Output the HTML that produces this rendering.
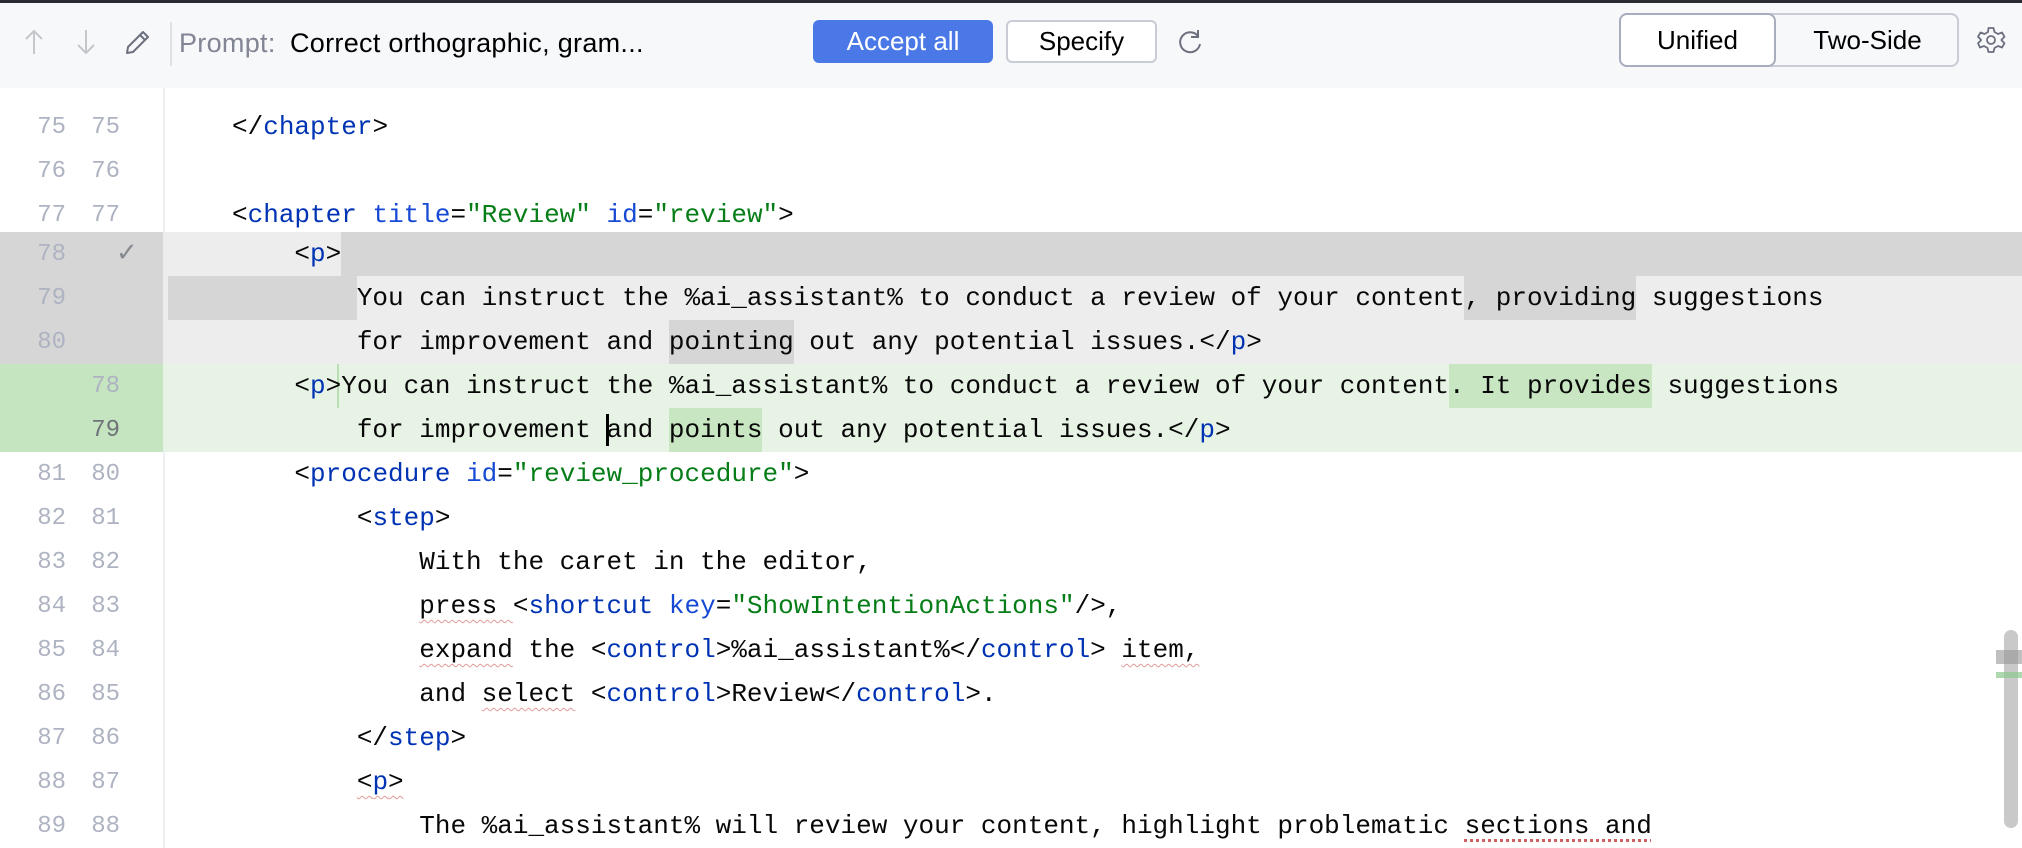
<!DOCTYPE html>
<html><head><meta charset="utf-8"><style>
*{margin:0;padding:0;box-sizing:border-box}
body{width:2022px;height:848px;overflow:hidden;background:#fff;position:relative;font-family:"Liberation Sans",sans-serif}
.hdr{position:absolute;left:0;top:0;width:2022px;height:88px;background:#f7f8fa;z-index:5}
.topbar{position:absolute;left:0;top:0;width:2022px;height:3px;background:#2b2a30}
.row{position:absolute;left:0;width:2022px;height:44px}
.g{position:absolute;left:0;top:0;width:163px;height:44px;font-family:"Liberation Mono",monospace;font-size:24px;color:#aeb3c2}
.n1{position:absolute;left:26px;width:40px;text-align:right;top:9px}
.n2{position:absolute;left:80px;width:40px;text-align:right;top:9px}
.code{position:absolute;left:169.6px;top:0;height:44px;line-height:44px;font-family:"Liberation Mono",monospace;font-size:26px;color:#080808;white-space:pre}
.t{color:#0033b3}.a{color:#174ad4}.v{color:#067d17}
.w{text-decoration:underline wavy #e09a9a;text-decoration-thickness:1px;text-underline-offset:6px}
.hl{position:absolute;top:0;height:44px}
.sep{position:absolute;left:163px;top:88px;width:2px;height:760px;background:#eef0f3}
.ht{position:absolute;top:28px;font-size:27px;letter-spacing:0.3px}
</style></head><body>
<div class="sep"></div>

<div class="row" style="top:53px"><div class="code">        &lt;/<span class="t">procedure</span>&gt;</div></div>

<div class="row" style="top:105px"><div class="g"><span class="n1">75</span><span class="n2">75</span></div><div class="code">    &lt;/<span class="t">chapter</span>&gt;</div></div>
<div class="row" style="top:149px"><div class="g"><span class="n1">76</span><span class="n2">76</span></div></div>
<div class="row" style="top:193px"><div class="g"><span class="n1">77</span><span class="n2">77</span></div><div class="code">    &lt;<span class="t">chapter</span> <span class="a">title</span>=<span class="v">"Review"</span> <span class="a">id</span>=<span class="v">"review"</span>&gt;</div></div>

<div class="row" style="top:232px;background:#ededed">
<div class="g" style="background:#d6d6d6"><span class="n1">78</span><span style="position:absolute;left:116px;top:6px;font-size:26px;color:#868a91;font-family:'DejaVu Sans',sans-serif">✓</span></div>
<div class="hl" style="left:341px;width:1681px;background:#d6d6d6"></div>
<div class="code">        &lt;<span class="t">p</span>&gt;</div></div>
<div class="row" style="top:276px;background:#ededed">
<div class="g" style="background:#d6d6d6"><span class="n1">79</span></div>
<div class="hl" style="left:168px;width:189px;background:#d6d6d6"></div>
<div class="hl" style="left:1464px;width:172px;background:#d6d6d6"></div>
<div class="code">            You can instruct the %ai_assistant% to conduct a review of your content, providing suggestions</div></div>
<div class="row" style="top:320px;background:#ededed">
<div class="g" style="background:#d6d6d6"><span class="n1">80</span></div>
<div class="hl" style="left:668.8px;width:124.8px;background:#d6d6d6"></div>
<div class="code">            for improvement and pointing out any potential issues.&lt;/<span class="t">p</span>&gt;</div></div>
<div class="row" style="top:364px;background:#e7f3e5">
<div class="g" style="background:#c5e5c0"><span class="n2">78</span></div>
<div class="hl" style="left:1448.8px;width:202.8px;background:#c8e6c2"></div>
<div class="hl" style="left:337px;width:2px;background:#b8dfb2"></div>
<div class="code">        &lt;<span class="t">p</span>&gt;You can instruct the %ai_assistant% to conduct a review of your content. It provides suggestions</div></div>
<div class="row" style="top:408px;background:#e7f3e5">
<div class="g" style="background:#c5e5c0"><span class="n2" style="color:#6f737a">79</span></div>
<div class="hl" style="left:668.8px;width:93.6px;background:#c8e6c2"></div>
<div class="hl" style="left:606px;top:6px;height:32px;width:3px;background:#000"></div>
<div class="code">            for improvement and points out any potential issues.&lt;/<span class="t">p</span>&gt;</div></div>

<div class="row" style="top:452px"><div class="g"><span class="n1">81</span><span class="n2">80</span></div><div class="code">        &lt;<span class="t">procedure</span> <span class="a">id</span>=<span class="v">"review_procedure"</span>&gt;</div></div>
<div class="row" style="top:496px"><div class="g"><span class="n1">82</span><span class="n2">81</span></div><div class="code">            &lt;<span class="t">step</span>&gt;</div></div>
<div class="row" style="top:540px"><div class="g"><span class="n1">83</span><span class="n2">82</span></div><div class="code">                With the caret in the editor,</div></div>
<div class="row" style="top:584px"><div class="g"><span class="n1">84</span><span class="n2">83</span></div><div class="code">                <span class="w">press </span>&lt;<span class="t">shortcut</span> <span class="a">key</span>=<span class="v">"ShowIntentionActions"</span>/&gt;,</div></div>
<div class="row" style="top:628px"><div class="g"><span class="n1">85</span><span class="n2">84</span></div><div class="code">                <span class="w">expand</span> the &lt;<span class="t">control</span>&gt;%ai_assistant%&lt;/<span class="t">control</span>&gt; <span class="w">item,</span></div></div>
<div class="row" style="top:672px"><div class="g"><span class="n1">86</span><span class="n2">85</span></div><div class="code">                and <span class="w">select</span> &lt;<span class="t">control</span>&gt;Review&lt;/<span class="t">control</span>&gt;.</div></div>
<div class="row" style="top:716px"><div class="g"><span class="n1">87</span><span class="n2">86</span></div><div class="code">            &lt;/<span class="t">step</span>&gt;</div></div>
<div class="row" style="top:760px"><div class="g"><span class="n1">88</span><span class="n2">87</span></div><div class="code">            <span class="w">&lt;<span class="t">p</span>&gt;</span></div></div>
<div class="row" style="top:804px"><div class="g"><span class="n1">89</span><span class="n2">88</span></div><div class="code">                The %ai_assistant% will review your content, highlight problematic <span style="text-decoration:underline dotted #d06060;text-decoration-thickness:3px;text-underline-offset:6px">sections and</span></div></div>

<div style="position:absolute;left:2004px;top:630px;width:14px;height:198px;border-radius:7px;background:#c9c9c9"></div>
<div style="position:absolute;left:1996px;top:650px;width:26px;height:14px;background:rgba(150,150,150,.6)"></div>
<div style="position:absolute;left:1996px;top:672px;width:26px;height:6px;background:rgba(140,200,140,.7)"></div>

<div class="hdr">
<div class="topbar"></div>
<svg style="position:absolute;left:20px;top:28px" width="30" height="28" viewBox="0 0 30 28"><path d="M14 26V3M6 11l8-8 8 8" fill="none" stroke="#c4c6cc" stroke-width="2"/></svg>
<svg style="position:absolute;left:72px;top:28px" width="30" height="28" viewBox="0 0 30 28"><path d="M14 2v23M6 17l8 8 8-8" fill="none" stroke="#c4c6cc" stroke-width="2"/></svg>
<svg style="position:absolute;left:124px;top:27px" width="30" height="30" viewBox="0 0 30 30"><path d="M3 26l1-6L19 5l5 5L9 25zM16 8l5 5" fill="none" stroke="#6c707e" stroke-width="2" stroke-linejoin="round"/></svg>
<div style="position:absolute;left:170px;top:22px;width:2px;height:44px;background:#dfe1e5"></div>
<div class="ht" style="left:179px;color:#818594">Prompt:</div>
<div class="ht" style="left:290px;color:#000">Correct orthographic, gram...</div>
<div style="position:absolute;left:813px;top:20px;width:180px;height:43px;background:#4a78e6;border-radius:6px;color:#fff;font-size:26px;text-align:center;line-height:43px">Accept all</div>
<div style="position:absolute;left:1006px;top:20px;width:151px;height:43px;background:#fff;border:2px solid #c9ccd6;border-radius:6px;color:#000;font-size:26px;text-align:center;line-height:39px">Specify</div>
<svg style="position:absolute;left:1175px;top:27px" width="30" height="30" viewBox="0 0 30 30"><path d="M23 9A10 10 0 1 0 25 17" fill="none" stroke="#6c707e" stroke-width="2"/><path d="M23 3v7h-7" fill="none" stroke="#6c707e" stroke-width="2"/></svg>
<div style="position:absolute;left:1619px;top:13px;width:340px;height:54px;border:2px solid #c9ccd6;border-radius:8px;background:#f7f8fa"></div>
<div style="position:absolute;left:1619px;top:13px;width:157px;height:54px;border:2px solid #a8adbd;border-radius:8px;background:#fff;font-size:26px;text-align:center;line-height:50px;color:#000">Unified</div>
<div style="position:absolute;left:1776px;top:13px;width:183px;height:54px;font-size:26px;text-align:center;line-height:54px;color:#000">Two-Side</div>
<svg style="position:absolute;left:1976px;top:25px" width="30" height="30" viewBox="0 0 30 30"><path d="M12.5 3h5l1 4 3.5 2 4-1.5 2.5 4.3-3 3 0 .4 3 3-2.5 4.3-4-1.5-3.5 2-1 4h-5l-1-4-3.5-2-4 1.5L2 18.2l3-3v-.4l-3-3 2.5-4.3 4 1.5 3.5-2z" fill="none" stroke="#6c707e" stroke-width="1.8" stroke-linejoin="round"/><circle cx="15" cy="15" r="4" fill="none" stroke="#6c707e" stroke-width="1.8"/></svg>
</div>
</body></html>
